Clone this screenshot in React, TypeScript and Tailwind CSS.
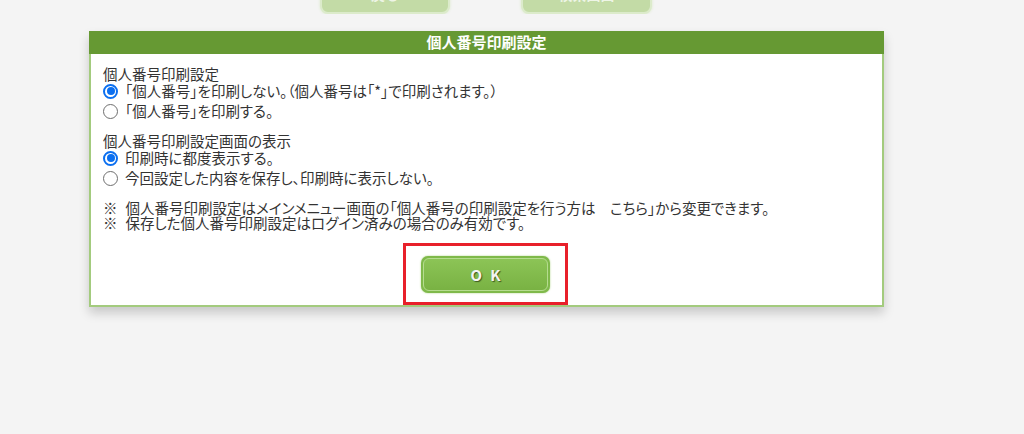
import React from "react";

function Radio({ checked }: { checked?: boolean }) {
  return checked ? (
    <span className="flex h-[15px] w-[15px] shrink-0 items-center justify-center rounded-full border-2 border-[#0b6ff0] bg-white">
      <span className="h-[8px] w-[8px] rounded-full bg-[#0b6ff0]" />
    </span>
  ) : (
    <span className="h-[15px] w-[15px] shrink-0 rounded-full border border-[#6f6f6f] bg-white" />
  );
}

function Row({ checked, children }: { checked?: boolean; children: React.ReactNode }) {
  return (
    <div className="flex h-[20px] items-center gap-[7px]">
      <Radio checked={checked} />
      <span>{children}</span>
    </div>
  );
}

export default function App() {
  return (
    <div
      className="flex h-[434px] w-[1024px] flex-col bg-[#f4f4f4] text-[14px] text-[#333]"
      style={{ fontFamily: '"Noto Sans CJK JP", "Noto Sans", sans-serif' }}
    >
      <div className="flex h-[14px] items-end overflow-hidden pl-[320px]">
        <div className="flex h-[40px] w-[130px] items-center justify-center rounded-[8px] border-2 border-[#dcebcb] bg-[#c3dba6] font-bold text-[#eef5e6] shadow-[0_0_3px_#d9e8c8]">
          戻る
        </div>
        <div className="ml-[71px] flex h-[40px] w-[131px] items-center justify-center rounded-[8px] border-2 border-[#dcebcb] bg-[#c3dba6] font-bold text-[#eef5e6] shadow-[0_0_3px_#d9e8c8]">
          検索画面
        </div>
      </div>
      <div className="ml-[89px] mt-[17px] w-[795px] shadow-[0_6px_10px_rgba(0,0,0,0.18)]">
        <div className="flex h-[23px] items-center justify-center bg-[#669933] text-[15px] font-bold text-white">
          個人番号印刷設定
        </div>
        <div className="border-2 border-t-0 border-[#a3cb7e] bg-white pl-[12px] pt-[13px] text-[14.5px] leading-[14px] [font-feature-settings:'palt']">
          <div>個人番号印刷設定</div>
          <Row checked>「個人番号」を印刷しない。（個人番号は「*」で印刷されます。）</Row>
          <Row>「個人番号」を印刷する。</Row>
          <div className="mt-[13px]">個人番号印刷設定画面の表示</div>
          <Row checked>印刷時に都度表示する。</Row>
          <Row>今回設定した内容を保存し、印刷時に表示しない。</Row>
          <div className="mt-[12px] leading-[15px]">
            <div className="flex gap-[8px]">
              <span>※</span>
              <span>個人番号印刷設定はメインメニュー画面の「個人番号の印刷設定を行う方は　こちら」から変更できます。</span>
            </div>
            <div className="flex gap-[8px]">
              <span>※</span>
              <span>保存した個人番号印刷設定はログイン済みの場合のみ有効です。</span>
            </div>
          </div>
          <div className="mt-[13px] flex justify-center pr-[14px]">
            <div className="h-[62px] w-[165px] border-[3px] border-[#e8202a] pl-[15px] pt-[10px]">
              <div className="flex h-[37px] w-[129px] items-center justify-center rounded-[7px] bg-[#7fb94a] p-[2px] shadow-[0_0_2px_#a7d07f]">
                <div className="flex h-full w-full items-center justify-center rounded-[6px] border border-[#b5dc8f] bg-gradient-to-b from-[#8cc456] to-[#79b243] pl-[8px] text-[15px] font-bold tracking-[8px] text-[#f4f4f4] [text-shadow:1px_1px_1px_#3d5a20]">
                  OK
                </div>
              </div>
            </div>
          </div>
        </div>
      </div>
    </div>
  );
}
